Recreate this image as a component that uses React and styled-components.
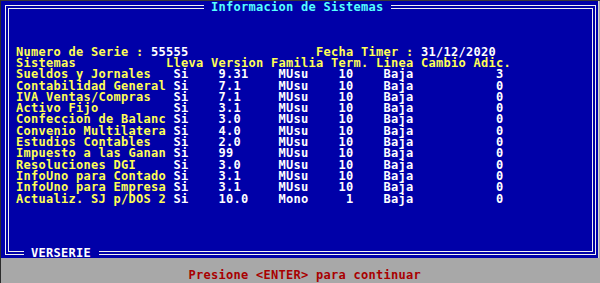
import React from "react";
import styled, { createGlobalStyle } from "styled-components";

const C = 7.5; // character cell width
const ROW = 11.32; // character cell height

const Global = createGlobalStyle`
  html, body { margin: 0; padding: 0; background: #a8a8a8; }
  * { box-sizing: border-box; }
`;

const Screen = styled.div`
  width: 600px;
  height: 283px;
  display: flex;
  flex-direction: column;
  background: #a8a8a8;
  border-top: 1px solid #383838;
  border-left: 1px solid #2c2c2c;
  font-family: "DejaVu Sans Mono", "Liberation Mono", monospace;
  font-weight: bold;
  font-size: 12px;
  letter-spacing: 0.276px;
  line-height: ${ROW}px;
  white-space: pre;
  overflow: hidden;
`;

const Panel = styled.div`
  flex: none;
  height: 257px;
  width: 598px;
  display: flex;
  background: #0000a8;
  border-right: 1px solid #d4d4d4;
  padding: 4px 2px 3px 4px;
`;

const Frame = styled.div`
  position: relative;
  flex: 1;
  border: 1px solid #f0f0f0;
  box-shadow: inset 0 0 0 2px #0000a8, inset 0 0 0 3px #f0f0f0;
  padding: 40.6px 0 0 10px;
`;

const Legend = styled.div`
  position: absolute;
  left: ${(p) => p.$left}px;
  top: ${(p) => p.$top}px;
  padding: 0 ${C}px;
  line-height: 9px;
  background: #0000a8;
  color: ${(p) => p.$color};
`;

const InfoRow = styled.div`
  display: grid;
  grid-template-columns: ${40 * C}px 1fr;
  height: ${ROW}px;
`;

const Table = styled.div`
  display: flex;
  flex-direction: column;
`;

const Row = styled.div`
  display: grid;
  grid-template-columns: ${[20, 6, 8, 8, 6, 6, 7, 5].map((n) => `${n * C}px`).join(" ")};
  height: ${ROW}px;
`;

const Cell = styled.span`
  color: ${(p) => (p.$white ? "#ffffff" : "#ffff55")};
  text-align: ${(p) => (p.$right ? "right" : "left")};
  padding-left: ${(p) => (p.$indent || 0) * C}px;
  padding-right: ${(p) => (p.$pad || 0) * C}px;
`;

const Yellow = styled.span`
  color: #ffff55;
`;

const White = styled.span`
  color: #ffffff;
`;

const StatusBar = styled.div`
  flex: 1;
  padding: 11.6px 0 0 187.5px;
  color: #a80000;
`;

const rows = [
  ["Sueldos y Jornales", "9.31", "MUsu", "10", "3"],
  ["Contabilidad General", "7.1", "MUsu", "10", "0"],
  ["IVA Ventas/Compras", "7.1", "MUsu", "10", "0"],
  ["Activo Fijo", "3.1", "MUsu", "10", "0"],
  ["Confeccion de Balanc", "3.0", "MUsu", "10", "0"],
  ["Convenio Multilatera", "4.0", "MUsu", "10", "0"],
  ["Estudios Contables", "2.0", "MUsu", "10", "0"],
  ["Impuesto a las Ganan", "99", "MUsu", "10", "0"],
  ["Resoluciones DGI", "3.0", "MUsu", "10", "0"],
  ["InfoUno para Contado", "3.1", "MUsu", "10", "0"],
  ["InfoUno para Empresa", "3.1", "MUsu", "10", "0"],
  ["Actualiz. SJ p/DOS 2", "10.0", "Mono", "1", "0"],
];

const headers = ["Sistemas", "Lleva", "Version", "Familia", "Term.", "Linea", "Cambio", "Adic."];

export default function App() {
  return (
    <>
      <Global />
      <Screen>
        <Panel>
          <Frame>
            <Legend $left={197.5} $top={-3.2} $color="#55ffff">
              Informacion de Sistemas
            </Legend>
            <InfoRow>
              <span>
                <Yellow>Numero de Serie : </Yellow>
                <White>55555</White>
              </span>
              <span>
                <Yellow>Fecha Timer : </Yellow>
                <White>31/12/2020</White>
              </span>
            </InfoRow>
            <Table>
              <Row>
                {headers.map((h) => (
                  <Cell key={h}>{h}</Cell>
                ))}
              </Row>
              {rows.map(([name, ver, fam, term, adic]) => (
                <Row key={name}>
                  <Cell>{name}</Cell>
                  <Cell $white $indent={1}>Si</Cell>
                  <Cell $white $indent={1}>{ver}</Cell>
                  <Cell $white $indent={1}>{fam}</Cell>
                  <Cell $white $right $pad={3}>{term}</Cell>
                  <Cell $white $indent={1}>Baja</Cell>
                  <Cell $white />
                  <Cell $white $right $pad={1}>{adic}</Cell>
                </Row>
              ))}
            </Table>
            <Legend $left={17.5} $top={242.8} $color="#ffffff">
              VERSERIE
            </Legend>
          </Frame>
        </Panel>
        <StatusBar>Presione &lt;ENTER&gt; para continuar</StatusBar>
      </Screen>
    </>
  );
}
